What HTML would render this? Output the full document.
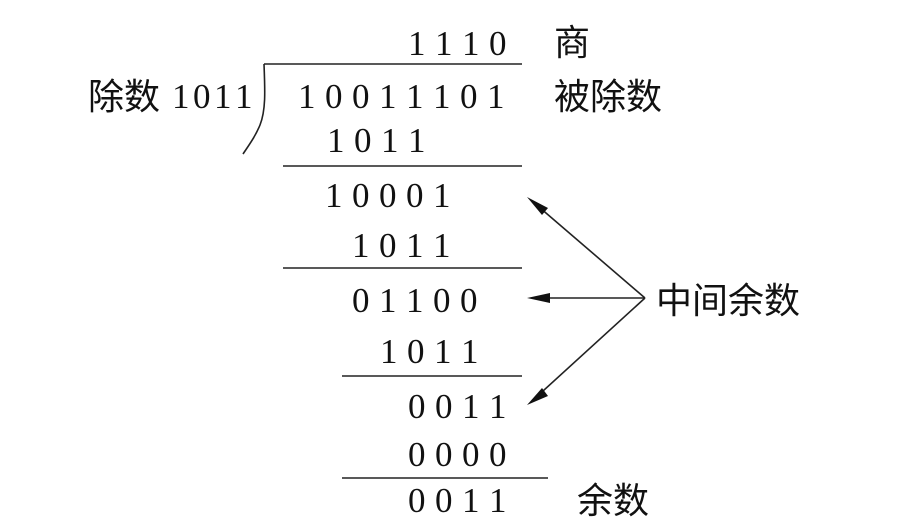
<!DOCTYPE html>
<html><head><meta charset="utf-8"><style>
html,body{margin:0;padding:0;background:#fff;}
svg{display:block;}
text{font-family:"Liberation Serif",serif;font-size:35px;fill:#111;}
.c{font-family:"Liberation Sans","Noto Sans CJK SC",sans-serif;font-size:36px;}
</style></head><body>
<svg width="914" height="530" viewBox="0 0 914 530" xmlns="http://www.w3.org/2000/svg">
<g stroke="#222" stroke-width="1.6" fill="none">
<path d="M264 64 L522 64"/>
<path d="M264 64 C265 90 266 110 260 125 C255 137 249 145 243 154"/>
<path d="M283 166 L522 166"/>
<path d="M283 268 L522 268"/>
<path d="M342 376 L522 376"/>
<path d="M342 478 L548 478"/>
<path d="M645 298 L532 201"/>
<path d="M645 298 L532 298"/>
<path d="M645 298 L532 401"/>
</g>
<g fill="#111">
<polygon points="527,197 548,208 542,215"/>
<polygon points="527,298 550,293 550,303"/>
<polygon points="527,405 542,388 548,396"/>
</g>
<text x="408 435 462 489" y="55">1110</text>
<text x="298 325 352 379 406 433 460 487" y="108">10011101</text>
<text x="327 354 381 408" y="152">1011</text>
<text x="325 352 379 406 433" y="207">10001</text>
<text x="352 379 406 433" y="257">1011</text>
<text x="352 379 406 433 460" y="312">01100</text>
<text x="380 407 434 461" y="363">1011</text>
<text x="408 435 462 489" y="418">0011</text>
<text x="408 435 462 489" y="466">0000</text>
<text x="408 435 462 489" y="512">0011</text>
<text x="172 193 214 235" y="108">1011</text>
<text class="c" x="88" y="109">除数</text>
<text class="c" x="554" y="55">商</text>
<text class="c" x="554" y="109">被除数</text>
<text class="c" x="656" y="313">中间余数</text>
<text class="c" x="577" y="513">余数</text>
</svg>
</body></html>
